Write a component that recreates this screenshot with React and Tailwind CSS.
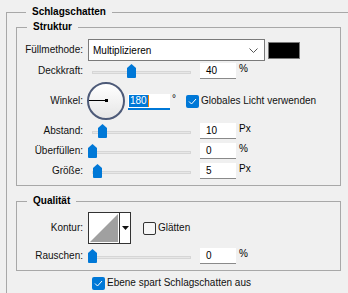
const font = { fontFamily: '"Liberation Sans", Arial, sans-serif' };

function Thumb({ left }) {
  return (
    <svg
      className="absolute top-[3px]"
      style={{ left }}
      width="9"
      height="14"
      viewBox="0 0 9 14"
    >
      <path d="M4.5 0 L9 4 L9 13 Q9 14 8 14 L1 14 Q0 14 0 13 L0 4 Z" fill="#0078d7" />
    </svg>
  );
}

function Slider({ pos }) {
  return (
    <div className="relative w-[104px] h-[20px] shrink-0">
      <div className="absolute left-[4px] right-[1px] top-[10px] h-[3px] bg-[#e7e7e7] border border-[#d6d6d6]" />
      <Thumb left={pos} />
    </div>
  );
}

function NumInput({ value }) {
  return (
    <div className="ml-[8px] w-[36px] h-[16px] bg-white border-b border-[#8a8a8a] pl-[6px] text-[10px] leading-[16px] text-black">
      {value}
    </div>
  );
}

function Unit({ children }) {
  return <div className="ml-[3px] self-start mt-[2px] text-[10px] leading-[12px] text-black">{children}</div>;
}

function Label({ children }) {
  return (
    <div className="w-[66px] shrink-0 text-right text-[10px] leading-[16px] text-[#111] whitespace-nowrap">
      {children}
    </div>
  );
}

function SliderRow({ label, pos, value, unit }) {
  return (
    <div className="flex items-center h-[20px]">
      <Label>{label}</Label>
      <div className="ml-[5px] flex items-center h-[20px]">
        <Slider pos={pos} />
        <NumInput value={value} />
        <Unit>{unit}</Unit>
      </div>
    </div>
  );
}

function Check({ checked }) {
  return checked ? (
    <div className="w-[13px] h-[13px] rounded-[2px] bg-[#0078d7] flex items-center justify-center shrink-0">
      <svg width="9" height="7" viewBox="0 0 9 7">
        <path d="M1 3.5 L3.5 6 L8 1" stroke="white" strokeWidth="1" fill="none" />
      </svg>
    </div>
  ) : (
    <div className="w-[13px] h-[13px] rounded-[2px] border border-[#333] bg-[#f6f6f6] shrink-0" />
  );
}

function Legend({ children }) {
  return (
    <div className="-mt-[8px] ml-[10px] px-[6px] w-fit bg-[#f0f0f0] text-[10px] leading-[14px] font-bold text-black whitespace-nowrap">
      {children}
    </div>
  );
}

export default function App() {
  return (
    <div className="w-[348px] h-[293px] overflow-hidden bg-[#f0f0f0] pl-[6px] pt-[12px]" style={font}>
      <div className="w-[360px] h-[320px] border border-[#a8a8a8] pl-[9px]">
        <Legend>Schlagschatten</Legend>

        {/* Struktur */}
        <div className="mt-[8px] w-[325px] border border-[#a8a8a8] pb-[4px]">
          <Legend>Struktur</Legend>

          <div className="mt-[5px] flex items-center h-[22px]">
            <Label>Füllmethode:</Label>
            <div className="ml-[5px] w-[177px] h-[22px] bg-white border border-[#7a7a7a] flex items-center justify-between pl-[4px] pr-[6px] text-[10px] text-black">
              <span>Multiplizieren</span>
              <svg width="9" height="5" viewBox="0 0 9 5">
                <path d="M0.5 0.5 L4.5 4.5 L8.5 0.5" stroke="#555" strokeWidth="1" fill="none" />
              </svg>
            </div>
            <div className="ml-[3px] w-[32px] h-[17px] bg-black border border-[#7a7a7a]" />
          </div>

          <SliderRow label="Deckkraft:" pos={39} value="40" unit="%" />

          <div className="flex items-center h-[40px]">
            <Label>Winkel:</Label>
            <div className="ml-[4px] relative w-[38px] h-[38px] rounded-full border-2 border-[#4d5a78] bg-gradient-to-b from-white to-[#e6e6e6] shrink-0">
              <div className="absolute left-0 top-[16px] w-[17px] h-[1px] bg-black" />
              <div className="absolute left-[16px] top-[15px] w-[3px] h-[3px] bg-black" />
            </div>
            <div className="ml-[3px] mt-[1px] w-[42px] h-[16px] bg-white border-b-2 border-[#0078d7] pl-[1px] flex items-center">
              <span className="bg-[#0078d7] text-white text-[10px] leading-[12px] px-[1px]">180</span>
              <span className="w-[1px] h-[12px] bg-[#f08000]" />
            </div>
            <div className="ml-[2px] self-start mt-[13px] text-[10px] leading-[10px] text-black">°</div>
            <div className="ml-[10px] flex items-center">
              <Check checked />
              <span className="ml-[2px] text-[10px] leading-[16px] text-[#111] whitespace-nowrap">Globales Licht verwenden</span>
            </div>
          </div>

          <SliderRow label="Abstand:" pos={10} value="10" unit="Px" />
          <SliderRow label="Überfüllen:" pos={0} value="0" unit="%" />
          <SliderRow label="Größe:" pos={5} value="5" unit="Px" />
        </div>

        {/* Qualität */}
        <div className="mt-[15px] w-[325px] border border-[#a8a8a8] pb-[4px]">
          <Legend>Qualität</Legend>

          <div className="mt-[4px] flex items-center h-[32px]">
            <Label>Kontur:</Label>
            <div className="ml-[5px] w-[43px] h-[32px] border border-[#333] bg-white flex shrink-0">
              <svg width="30" height="30" viewBox="0 0 30 30" className="shrink-0">
                <polygon points="1,29 29,1 29,29" fill="#a0a0a0" />
              </svg>
              <div className="flex-1 border-l border-[#333] flex items-center justify-center">
                <svg width="7" height="4" viewBox="0 0 7 4">
                  <polygon points="0,0 7,0 3.5,4" fill="#111" />
                </svg>
              </div>
            </div>
            <div className="ml-[12px] flex items-center">
              <Check />
              <span className="ml-[2px] text-[10px] leading-[16px] text-[#111]">Glätten</span>
            </div>
          </div>

          <div className="mt-[2px]">
            <SliderRow label="Rauschen:" pos={0} value="0" unit="%" />
          </div>
        </div>

        <div className="mt-[2px] h-[20px] flex items-center pl-[76px]">
          <Check checked />
          <span className="ml-[2px] text-[10px] leading-[16px] text-[#111] whitespace-nowrap">Ebene spart Schlagschatten aus</span>
        </div>
      </div>
    </div>
  );
}
